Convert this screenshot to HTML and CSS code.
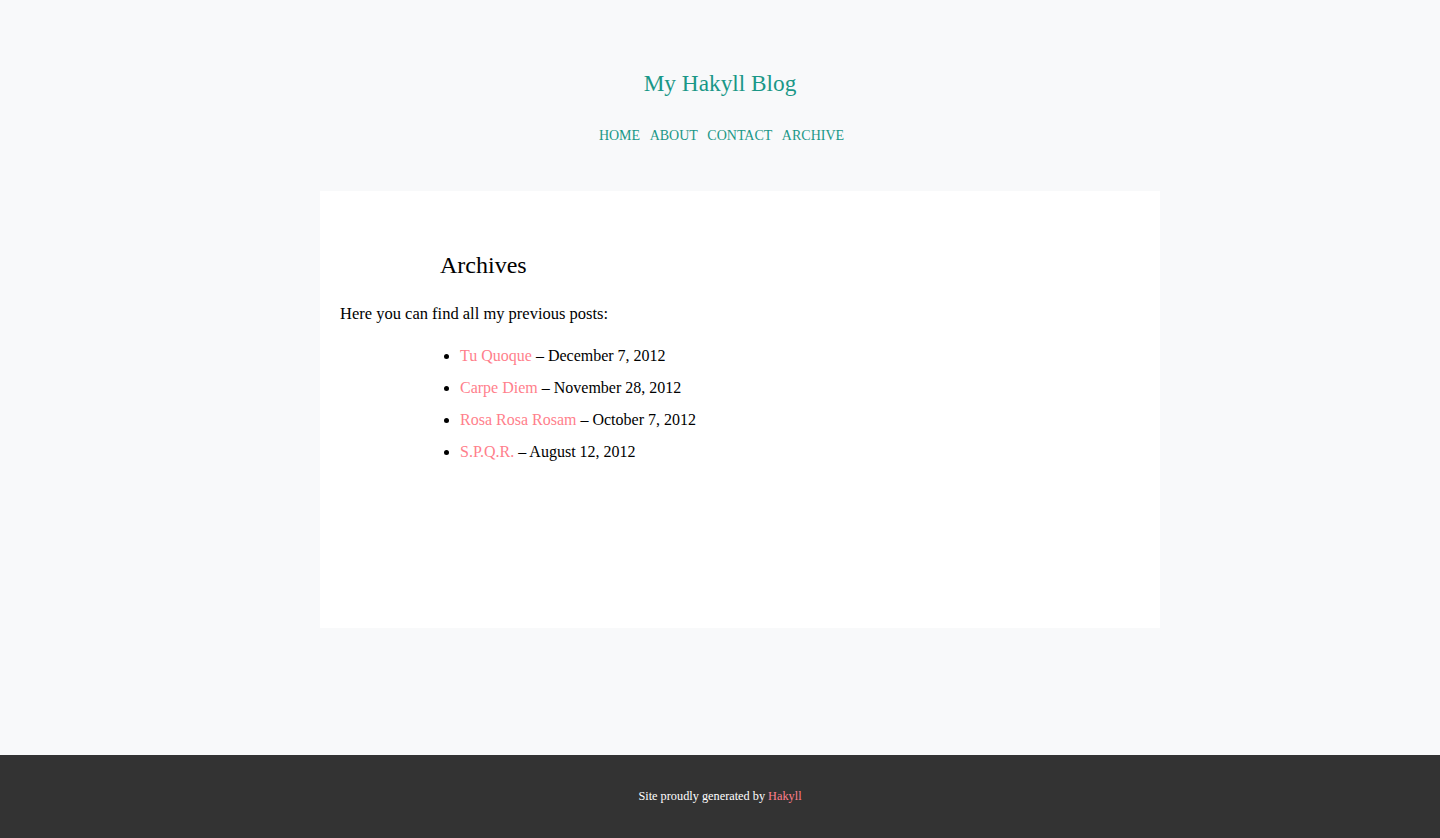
FILE: index.html
```html
<!DOCTYPE html>
<html>
<head>
<meta charset="utf-8">
<title>My Hakyll Blog - Archives</title>
<link rel="stylesheet" href="styles.css">
</head>
<body>
<header class="site-header">
  <div class="logo"><a href="#">My Hakyll Blog</a></div>
  <nav class="nav">
    <a href="#">Home</a>
    <a href="#">About</a>
    <a href="#">Contact</a>
    <a href="#">Archive</a>
  </nav>
</header>
<main class="card">
  <h1 class="title">Archives</h1>
  <p class="intro">Here you can find all my previous posts:</p>
  <ul class="posts">
    <li><a href="#">Tu Quoque</a> – December 7, 2012</li>
    <li><a href="#">Carpe Diem</a> – November 28, 2012</li>
    <li><a href="#">Rosa Rosa Rosam</a> – October 7, 2012</li>
    <li><a href="#">S.P.Q.R.</a> – August 12, 2012</li>
  </ul>
</main>
<footer class="site-footer">
  Site proudly generated by <a href="#">Hakyll</a>
</footer>
</body>
</html>
```
FILE: styles.css
```css
html, body {
  margin: 0;
  padding: 0;
}
body {
  background: #f8f9fa;
  font-family: "Liberation Serif", "DejaVu Serif", serif;
  color: #000;
}
a {
  text-decoration: none;
}
.site-header {
  display: flex;
  flex-direction: column;
  align-items: center;
  padding-top: 68px;
}
.logo {
  font-size: 23.3px;
  line-height: 30px;
}
.logo a {
  color: #1a9787;
}
.nav {
  display: flex;
  gap: 9.5px;
  margin-top: 28px;
  line-height: 20px;
  font-size: 14px;
  text-transform: uppercase;
  padding-left: 3px;
}
.nav a {
  color: #1a9787;
}
.card {
  display: block;
  width: 800px;
  margin: 45px 0 0 calc(50% - 400px);
  background: #fff;
  padding: 59px 20px 160px;
  box-sizing: content-box;
}
.title {
  margin: 0 0 0 100px;
  font-size: 24px;
  line-height: 30px;
  font-weight: normal;
}
.intro {
  margin: 22px 0 0;
  font-size: 16.5px;
  line-height: 24px;
}
.posts {
  margin: 14px 0 0;
  padding-left: 120px;
  font-size: 16px;
  line-height: 32px;
}
.posts a {
  color: #ff7f8c;
}
.site-footer {
  margin-top: 127px;
  background: #333;
  color: #fff;
  height: 83px;
  display: flex;
  align-items: center;
  justify-content: center;
  font-size: 12.3px;
}
.site-footer a {
  color: #ff7f8c;
  margin-left: 3px;
}
```
